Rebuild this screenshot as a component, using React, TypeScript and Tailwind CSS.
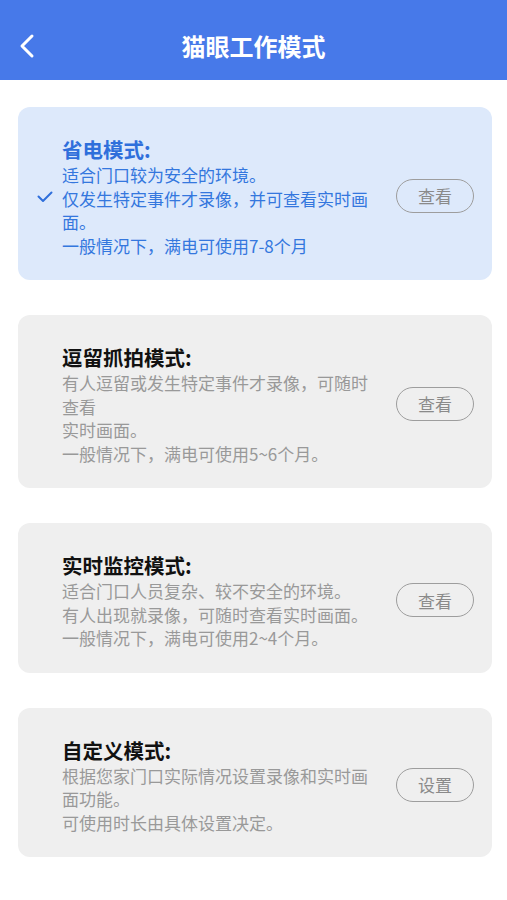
import React from "react";

type Mode = {
  title: string;
  lines: string[];
  btn: string;
  active?: boolean;
};

const modes: Mode[] = [
  {
    title: "省电模式:",
    lines: ["适合门口较为安全的环境。", "仅发生特定事件才录像，并可查看实时画面。", "一般情况下，满电可使用7-8个月"],
    btn: "查看",
    active: true,
  },
  {
    title: "逗留抓拍模式:",
    lines: ["有人逗留或发生特定事件才录像，可随时查看", "实时画面。", "一般情况下，满电可使用5~6个月。"],
    btn: "查看",
  },
  {
    title: "实时监控模式:",
    lines: ["适合门口人员复杂、较不安全的环境。", "有人出现就录像，可随时查看实时画面。", "一般情况下，满电可使用2~4个月。"],
    btn: "查看",
  },
  {
    title: "自定义模式:",
    lines: ["根据您家门口实际情况设置录像和实时画面功能。", "可使用时长由具体设置决定。"],
    btn: "设置",
  },
];

function Card({ m }: { m: Mode }) {
  return (
    <div
      className={
        "flex items-center rounded-[12px] pt-[28px] pb-[23px] " +
        (m.active ? "bg-[#dde9fb]" : "bg-[#efefef]")
      }
    >
      <div className="w-[44px] shrink-0 flex pl-[19px] pt-[1px]">
        {m.active && (
          <svg width="16" height="12" viewBox="0 0 16 12" fill="none">
            <path d="M1.5 5.5 L6 10 L14.5 1.5" stroke="#2f6fdb" strokeWidth="2" strokeLinecap="round" strokeLinejoin="round" />
          </svg>
        )}
      </div>
      <div className="w-[312px] shrink-0">
        <div
          className={
            "text-[20.5px] leading-[28px] font-bold " + (m.active ? "text-[#2f6fdb]" : "text-[#111111]")
          }
        >
          {m.title}
        </div>
        <div className={"text-[17px] leading-[23.5px] " + (m.active ? "text-[#3477de]" : "text-[#999999]")}>
          {m.lines.map((l, i) => (
            <div key={i}>{l}</div>
          ))}
        </div>
      </div>
      <div className="flex-1" />
      <div className="mr-[18px] w-[78px] h-[34px] shrink-0 rounded-full border border-[#9d9d9d] flex items-center justify-center text-[17px] text-[#8a8a8a]">
        {m.btn}
      </div>
    </div>
  );
}

export default function App() {
  return (
    <div
      className="w-[507px] h-[900px] bg-white overflow-hidden"
      style={{ fontFamily: '"Noto Sans CJK SC", "Noto Sans", sans-serif' }}
    >
      <div className="h-[80px] bg-[#4779e9] relative flex items-end justify-center pb-[18px]">
        <svg className="absolute left-[18px] top-[33px]" width="20" height="26" viewBox="0 0 20 26" fill="none">
          <path d="M14 3 L4 13 L14 23" stroke="white" strokeWidth="3" strokeLinecap="round" strokeLinejoin="round" />
        </svg>
        <div className="text-white text-[24px] leading-[32px] font-bold">猫眼工作模式</div>
      </div>
      <div className="pl-[18px] pr-[15px] pt-[27px] flex flex-col gap-[35px]">
        {modes.map((m, i) => (
          <Card key={i} m={m} />
        ))}
      </div>
    </div>
  );
}
